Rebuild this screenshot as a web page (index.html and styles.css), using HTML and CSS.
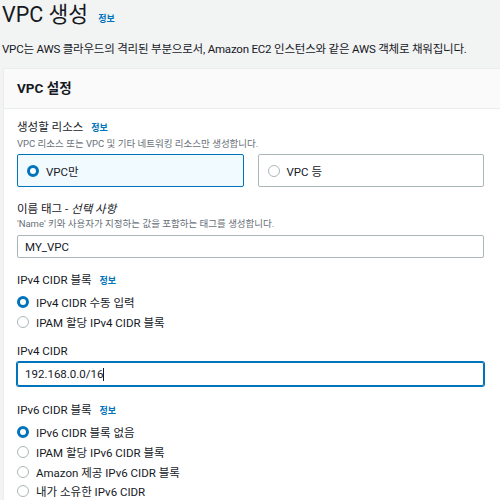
FILE: index.html
```html
<!DOCTYPE html>
<html lang="ko">
<head>
<meta charset="utf-8">
<link rel="stylesheet" href="styles.css">
</head>
<body>
<div class="page">
  <div class="title-row">
    <h1 class="title">VPC 생성</h1>
    <a class="info info-title">정보</a>
  </div>
  <p class="desc">VPC는 AWS 클라우드의 격리된 부분으로서, Amazon EC2 인스턴스와 같은 AWS 객체로 채워집니다.</p>
  <div class="card">
    <div class="card-header">VPC 설정</div>
    <div class="card-body">
      <div class="field">
        <div class="label">생성할 리소스 <a class="info">정보</a></div>
        <div class="hint">VPC 리소스 또는 VPC 및 기타 네트워킹 리소스만 생성합니다.</div>
        <div class="tiles">
          <div class="tile tile-on"><span class="radio radio-on"></span>VPC만</div>
          <div class="tile"><span class="radio"></span>VPC 등</div>
        </div>
      </div>
      <div class="field">
        <div class="label">이름 태그 - <i>선택 사항</i></div>
        <div class="hint hint-tight">'Name' 키와 사용자가 지정하는 값을 포함하는 태그를 생성합니다.</div>
        <div class="input input-after-hint">MY_VPC</div>
      </div>
      <div class="field">
        <div class="label">IPv4 CIDR 블록 <a class="info">정보</a></div>
        <div class="radios">
          <div class="opt"><span class="radio radio-on"></span>IPv4 CIDR 수동 입력</div>
          <div class="opt"><span class="radio"></span>IPAM 할당 IPv4 CIDR 블록</div>
        </div>
      </div>
      <div class="field field-close">
        <div class="label">IPv4 CIDR</div>
        <div class="input input-focus">192.168.0.0/16<span class="caret"></span></div>
      </div>
      <div class="field field-far">
        <div class="label">IPv6 CIDR 블록 <a class="info">정보</a></div>
        <div class="radios">
          <div class="opt"><span class="radio radio-on"></span>IPv6 CIDR 블록 없음</div>
          <div class="opt"><span class="radio"></span>IPAM 할당 IPv6 CIDR 블록</div>
          <div class="opt"><span class="radio"></span>Amazon 제공 IPv6 CIDR 블록</div>
          <div class="opt"><span class="radio"></span>내가 소유한 IPv6 CIDR</div>
        </div>
      </div>
    </div>
  </div>
</div>
</body>
</html>
```
FILE: styles.css
```css
html, body {
  margin: 0;
  padding: 0;
  background: #f2f3f3;
  font-family: Roboto, "Noto Sans CJK KR", sans-serif;
  color: #16191f;
  overflow: hidden;
}
.page {
  padding-left: 2px;
  width: 498px;
}
.title-row {
  display: flex;
  align-items: baseline;
  gap: 10px;
  height: 30px;
}
.title {
  margin: 0;
  font-size: 21.5px;
  font-weight: 400;
  line-height: 30px;
}
.info {
  color: #0073bb;
  font-weight: 700;
  font-size: 9px;
  text-decoration: none;
}
.desc {
  margin: 9px 0 9px 0;
  font-size: 11.5px;
  line-height: 20px;
  letter-spacing: -0.2px;
  white-space: nowrap;
}
.card {
  margin-left: 1px;
  background: #ffffff;
  border-top: 1px solid #eaeded;
  border-left: 1px solid #eaeded;
}
.card-header {
  background: #fafafa;
  border-bottom: 1px solid #eaeded;
  height: 39px;
  line-height: 38px;
  padding-left: 13px;
  font-size: 13.5px;
  font-weight: 700;
}
.card-body {
  padding: 10px 0 0 13px;
  width: 467px;
  display: flex;
  flex-direction: column;
  gap: 14px;
}
.field-close {
  margin-top: -2px;
}
.field-far {
  margin-top: 2px;
}
.label {
  font-size: 11.5px;
  line-height: 16px;
}
.label .info {
  margin-left: 5px;
}
.label i {
  font-style: italic;
}
.hint {
  font-size: 9.5px;
  line-height: 12px;
  color: #687078;
  margin-top: 2px;
  white-space: nowrap;
}
.hint-tight {
  margin-top: 1px;
}
.tiles {
  display: flex;
  gap: 14px;
  margin-top: 4px;
}
.tile {
  flex: 1;
  height: 31px;
  border: 1px solid #aab7b8;
  border-radius: 2px;
  display: flex;
  align-items: center;
  padding-left: 9px;
  font-size: 11.5px;
}
.tile-on {
  background: #f1faff;
  border-color: #0073bb;
}
.radio {
  width: 12px;
  height: 12px;
  box-sizing: border-box;
  border: 1px solid #aab7b8;
  border-radius: 50%;
  margin-right: 7px;
  flex: none;
  background: #fff;
}
.radio-on {
  border: 3.5px solid #0073bb;
}
.input {
  height: 22px;
  border: 1px solid #aab7b8;
  border-radius: 2px;
  display: flex;
  align-items: center;
  padding-left: 7px;
  font-size: 11.5px;
}
.input-after-hint {
  height: 21px;
  margin-top: 5px;
}
.input-focus {
  margin-top: 3px;
  border-color: #0073bb;
  box-shadow: 0 0 0 1px #0073bb;
}
.caret {
  width: 1px;
  height: 13px;
  background: #16191f;
}
.radios {
  display: flex;
  flex-direction: column;
  margin-top: 3px;
}
.opt {
  display: flex;
  align-items: center;
  height: 19.7px;
  font-size: 11.5px;
}
```
